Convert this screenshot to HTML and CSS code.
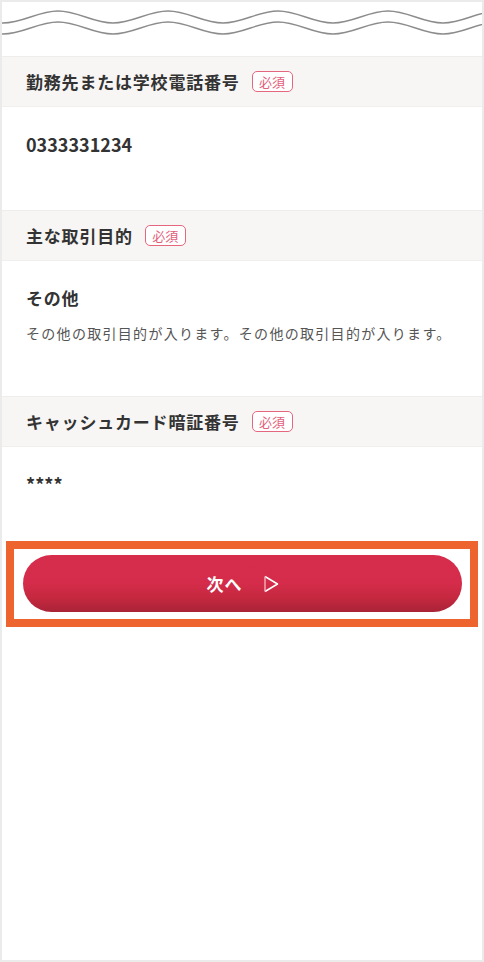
FILE: index.html
```html
<!DOCTYPE html>
<html lang="ja">
<head>
    <meta charset="utf-8">
    <title>確認</title>
    <meta name="viewport" content="width=device-width, initial-scale=1.0">
    <link rel="stylesheet" href="styles.css">
</head>
<body>
    <div class="screen">
        <div class="wave">
            <svg width="480" height="54" viewBox="0 0 480 54">
                <path id="wave-line" d="M-109 21 C-89 21 -74 9 -54 9 S-19 21 1 21 S36 9 56 9 S91 21 111 21 S146 9 166 9 S201 21 221 21 S256 9 276 9 S311 21 331 21 S366 9 386 9 S421 21 441 21 S476 9 496 9 S531 21 551 21" fill="none" stroke="#8c8c8c" stroke-width="1.5"/>
                <use href="#wave-line" y="11"/>
            </svg>
        </div>

        <div class="field-head">
            <span class="field-title">勤務先または学校電話番号</span>
            <span class="badge">必須</span>
        </div>
        <div class="field-body">
            <p class="value">0333331234</p>
        </div>

        <div class="field-head">
            <span class="field-title">主な取引目的</span>
            <span class="badge">必須</span>
        </div>
        <div class="field-body">
            <p class="value value-title">その他</p>
            <p class="note">その他の取引目的が入ります。その他の取引目的が入ります。</p>
        </div>

        <div class="field-head">
            <span class="field-title">キャッシュカード暗証番号</span>
            <span class="badge">必須</span>
        </div>
        <div class="field-body field-body-last">
            <p class="value">****</p>
        </div>

        <div class="actions">
            <div class="highlight">
                <button class="btn-next" type="button">
                    <span>次へ</span>
                    <svg width="16" height="18" viewBox="0 0 16 18">
                        <path d="M2 1.5 L14.5 9 L2 16.5" fill="none" stroke="#fff" stroke-width="1.5" stroke-linejoin="round"/>
                        <path d="M2 1.5 L2 16.5" fill="none" stroke="#f0a8b6" stroke-width="1.5"/>
                    </svg>
                </button>
            </div>
        </div>
    </div>
</body>
</html>
```

FILE: styles.css
```css
body {
    margin: 0;
    background-color: #ebebeb;
    font-family: "Noto Sans CJK JP", "Noto Sans", sans-serif;
    color: #333;
}

.screen {
    margin: 2px;
    height: 958px;
    background-color: #fff;
    overflow: hidden;
}

.wave {
    height: 54px;
}

.wave svg {
    display: block;
}

/* 項目の見出し */
.field-head {
    display: flex;
    align-items: center;
    height: 49px;
    padding: 0 24px;
    background-color: #f7f6f4;
    border-top: 1px solid #eeedeb;
    border-bottom: 1px solid #f0efed;
}

.field-title {
    font-size: 17px;
    font-weight: 700;
    letter-spacing: 0.8px;
    color: #333;
}

.badge {
    display: flex;
    align-items: center;
    justify-content: center;
    box-sizing: border-box;
    width: 41px;
    height: 21px;
    margin-left: 12px;
    border: 1.5px solid #e5677f;
    border-radius: 5px;
    font-size: 13px;
    color: #e2607a;
    background-color: #fff;
}

.field-body {
    padding: 24px 24px 53px;
}

.field-body-last {
    padding-bottom: 44px;
}

.value {
    margin: 0;
    font-size: 18px;
    line-height: 26px;
    font-weight: 700;
    color: #333;
}

.value-title {
    font-size: 17px;
    letter-spacing: 0.8px;
}

.note {
    margin: 13px 0 0;
    font-size: 14px;
    line-height: 19px;
    color: #555;
    letter-spacing: 1.3px;
    white-space: nowrap;
}

/* ボタン */
.actions {
    padding: 0 4px;
}

.highlight {
    border: 8px solid #ee642f;
    padding: 6px 8px 7px 9px;
}

.btn-next {
    display: flex;
    align-items: center;
    justify-content: center;
    gap: 20px;
    width: 100%;
    height: 57px;
    border: none;
    border-radius: 29px;
    background: linear-gradient(#d62d4c 0%, #d42c4a 50%, #c5283f 75%, #a92337 100%);
    color: #fff;
    font-family: inherit;
    font-size: 17px;
    font-weight: 700;
    letter-spacing: 1px;
    padding: 0;
    cursor: pointer;
}

.btn-next svg {
    display: block;
}
```
